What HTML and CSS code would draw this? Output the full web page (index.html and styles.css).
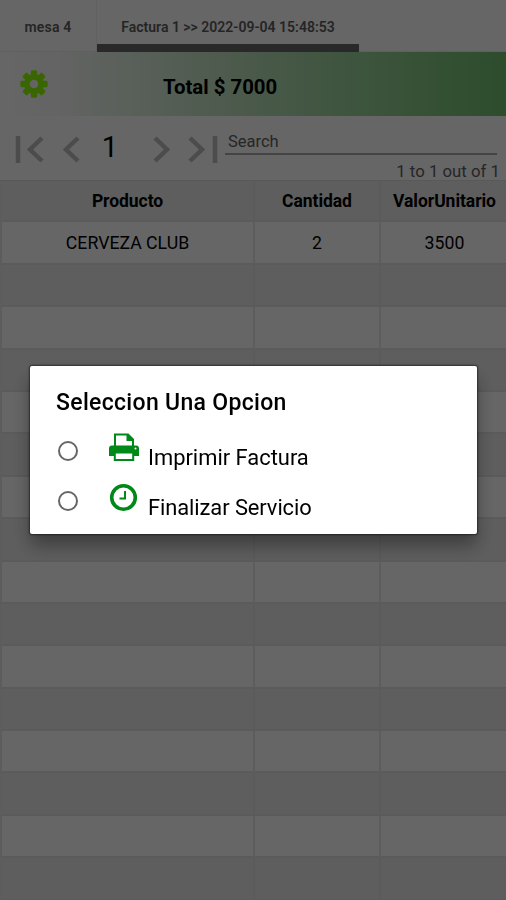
FILE: index.html
```html
<!DOCTYPE html>
<html lang="es">
<head>
<meta charset="utf-8">
<title>Factura</title>
<link rel="stylesheet" href="styles.css">
</head>
<body>
<main class="screen">
  <nav class="tabs">
    <div class="tab tab-table"><span>mesa 4</span></div>
    <div class="tab tab-invoice"><span>Factura 1 &gt;&gt; 2022-09-04 15:48:53</span></div>
  </nav>
  <header class="total-bar">
    <svg class="gear" viewBox="0 0 28 28"><g fill="currentColor"><rect x="10.800" y="0.300" width="6.400" height="27.400" rx="1.600"/><rect x="10.800" y="0.300" width="6.400" height="27.400" rx="1.600" transform="rotate(45 14 14)"/><rect x="10.800" y="0.300" width="6.400" height="27.400" rx="1.600" transform="rotate(90 14 14)"/><rect x="10.800" y="0.300" width="6.400" height="27.400" rx="1.600" transform="rotate(135 14 14)"/><circle cx="14" cy="14" r="10"/></g><circle cx="14" cy="14" r="4.300" fill="#f7f9f7"/></svg>
    <h1 class="total">Total $ 7000</h1>
  </header>
  <section class="toolbar">
    <div class="pager">
      <svg class="arrows" viewBox="0 0 80 30"><path d="M3 2V29M27 4L15 15.500L27 27M63 4L51 15.500L63 27"/></svg>
      <span class="page">1</span>
      <svg class="arrows arrows-next" viewBox="0 0 68 30"><path d="M4 4L16 15.500L4 27M39 4L51 15.500L39 27M64 2V29"/></svg>
    </div>
    <div class="search">
      <div class="search-field">Search</div>
      <div class="count">1 to 1 out of 1</div>
    </div>
  </section>
  <section class="grid">
    <div class="row head"><span>Producto</span><span>Cantidad</span><span>ValorUnitario</span></div>
    <div class="row"><span>CERVEZA CLUB</span><span>2</span><span>3500</span></div>
    <div class="row"><span></span><span></span><span></span></div>
    <div class="row"><span></span><span></span><span></span></div>
    <div class="row"><span></span><span></span><span></span></div>
    <div class="row"><span></span><span></span><span></span></div>
    <div class="row"><span></span><span></span><span></span></div>
    <div class="row"><span></span><span></span><span></span></div>
    <div class="row"><span></span><span></span><span></span></div>
    <div class="row"><span></span><span></span><span></span></div>
    <div class="row"><span></span><span></span><span></span></div>
    <div class="row"><span></span><span></span><span></span></div>
    <div class="row"><span></span><span></span><span></span></div>
    <div class="row"><span></span><span></span><span></span></div>
    <div class="row"><span></span><span></span><span></span></div>
    <div class="row"><span></span><span></span><span></span></div>
    <div class="row"><span></span><span></span><span></span></div>
  </section>
</main>
<div class="backdrop">
  <section class="dialog">
    <h2>Seleccion Una Opcion</h2>
    <div class="option">
      <i class="radio"></i>
      <svg class="icon" viewBox="0 0 30 30"><path d="M6 14V1.500H19L24 6.500V14M18.500 1.500V7H24" fill="none" stroke="currentColor" stroke-width="2"/><path d="M19 1L24.500 6.500V8H18V1Z" fill="currentColor"/><path d="M3 12.500H27Q30 12.500 30 15.500V23H25V19H5V23H0V15.500Q0 12.500 3 12.500Z" fill="currentColor"/><path d="M5.800 19.500H24.200V27H5.800Z" fill="#fff" stroke="currentColor" stroke-width="2"/><circle cx="26.500" cy="15.500" r="1" fill="#fff"/></svg>
      <span class="label print">Imprimir Factura</span>
    </div>
    <div class="option">
      <i class="radio"></i>
      <svg class="icon" viewBox="0 0 30 30"><g fill="none" stroke="currentColor"><circle cx="14.500" cy="14.500" r="11.800" stroke-width="3.600"/><path d="M16 8V15.500H10.500" stroke-width="2"/></g></svg>
      <span class="label finish">Finalizar Servicio</span>
    </div>
  </section>
</div>
</body>
</html>
```
FILE: styles.css
```css
* { box-sizing: border-box; }
body { margin: 0; font-family: Roboto, sans-serif; color: #000; background: #fff; overflow: hidden; }
.screen { height: 900px; overflow: hidden; display: flex; flex-direction: column; }
.tabs { height: 52px; flex: none; display: flex; border-bottom: 1px solid #eee; }
.tab { height: 52px; padding-top: 17px; text-align: center; white-space: nowrap; font-size: 14px; line-height: 20px; font-weight: 600; color: #5c5c5c; }
.tab-table { width: 97px; border-right: 1px solid #f2f2f2; letter-spacing: .2px; }
.tab-invoice { width: 262px; border-bottom: 8px solid #686868; }
.total-bar { height: 64px; flex: none; display: flex; align-items: center; background: linear-gradient(90deg, #fff 0, #f7f9f7 60px, #b9dfb9 250px, #70c070 506px); }
.gear { width: 28px; height: 28px; margin: 0 0 1px 20px; color: #90ff00; }
.total { margin: 5px 0 0 115px; font-size: 20.4px; line-height: 26px; font-weight: 700; }
.toolbar { height: 64px; flex: none; display: flex; }
.pager { width: 225px; padding: 18px 0 0 15px; display: flex; }
.arrows { width: 80px; height: 30px; flex: none; fill: none; stroke: #bdbdbd; stroke-width: 4.5; }
.arrows-next { width: 68px; margin-left: 26px; }
.page { width: 30px; line-height: 27px; text-align: center; font-size: 29px; }
.search { flex: 1; }
.search-field { width: 272px; height: 39px; padding: 16px 0 0 3px; border-bottom: 2px solid #aaa; font-size: 16.5px; line-height: 20px; color: #606060; }
.count { padding: 6px 6px 0 0; text-align: right; font-size: 16.8px; line-height: 20px; color: #606060; }
.row { display: grid; grid-template-columns: 255px 126px 125px; height: 42.4px; background: #fff; font-size: 17.7px; }
.row span { display: flex; align-items: center; justify-content: center; border-bottom: 2px solid #e3e3e3; border-right: 2px solid #e8e8e8; }
.row span:first-child { border-left: 2px solid #e8e8e8; }
.row:nth-child(odd) { background: #ebebeb; }
.row:nth-child(odd) span { border-right-color: #e3e3e3; }
.row span:last-child { border-right: 0; padding-left: 2px; }
.head { font-size: 17.5px; font-weight: 700; letter-spacing: -.05px; border-top: 1px solid #dedede; }
.backdrop { position: fixed; inset: 0; background: rgba(0, 0, 0, .6); }
.dialog { width: 447px; height: 168px; margin: 366px 0 0 30px; padding: 22px 26px; background: #fff; border-radius: 2px; box-shadow: 0 0 2px 1px rgba(0, 0, 0, .5), 0 12px 18px rgba(0, 0, 0, .35); }
.dialog h2 { margin: 1px 0 15px; font-size: 23px; line-height: 28px; font-weight: 500; letter-spacing: .32px; white-space: nowrap; }
.option { display: flex; height: 50px; }
.radio { width: 20px; height: 20px; margin: 9px 0 0 2px; border: 2px solid #666; border-radius: 50%; }
.icon { width: 30px; height: 30px; margin: 1px 8px 0 31px; color: #008818; }
.label { margin-top: 12px; margin-left: 1px; font-size: 21.9px; line-height: 28px; white-space: nowrap; }
.finish { letter-spacing: -.08px; }
```
